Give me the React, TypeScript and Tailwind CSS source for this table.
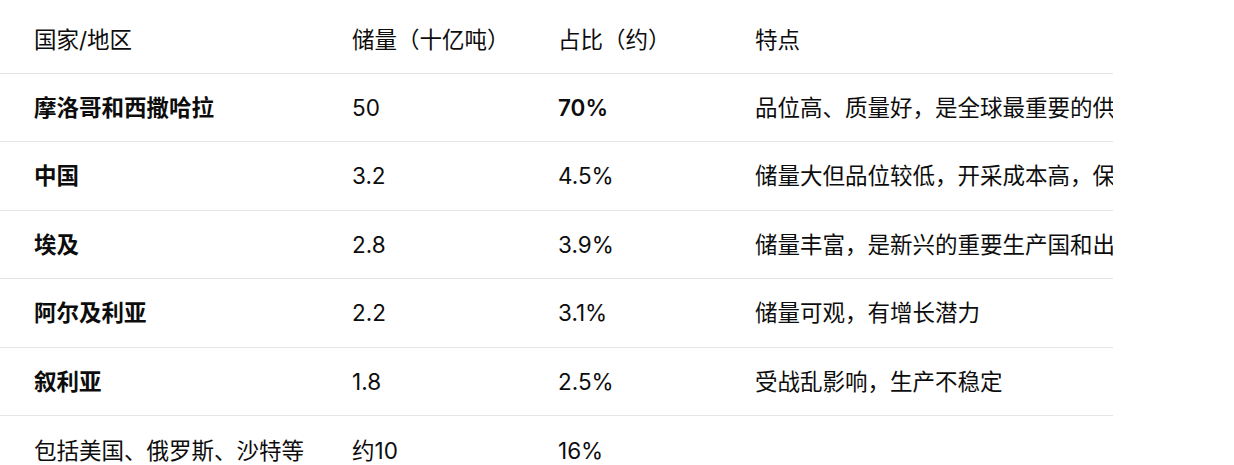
const rows = [
  { name: "摩洛哥和西撒哈拉", bold: true, reserve: "50", share: "70%", shareBold: true, note: "品位高、质量好，是全球最重要的供应来源" },
  { name: "中国", bold: true, reserve: "3.2", share: "4.5%", note: "储量大但品位较低，开采成本高，保护性开采" },
  { name: "埃及", bold: true, reserve: "2.8", share: "3.9%", note: "储量丰富，是新兴的重要生产国和出口国" },
  { name: "阿尔及利亚", bold: true, reserve: "2.2", share: "3.1%", note: "储量可观，有增长潜力" },
  { name: "叙利亚", bold: true, reserve: "1.8", share: "2.5%", note: "受战乱影响，生产不稳定" },
  { name: "包括美国、俄罗斯、沙特等", bold: false, reserve: "约10", share: "16%", note: "" },
];

export default function App() {
  return (
    <div
      className="h-[465px] w-[1234px] overflow-hidden bg-white text-[#0d0d0d]"
      style={{ fontFamily: 'Inter, "Noto Sans CJK SC", sans-serif' }}
    >
      <div className="w-[1113px] overflow-hidden">
        <table className="w-[1600px] table-fixed border-collapse text-left text-[22.5px] leading-[1.4]">
          <colgroup>
            <col className="w-[352px]" />
            <col className="w-[206px]" />
            <col className="w-[197px]" />
            <col />
          </colgroup>
          <thead>
            <tr className="h-[73px] border-b border-[#e5e5e5]">
              <th className="pl-[34px] pt-[7px] font-normal">国家/地区</th>
              <th className="pt-[7px] font-normal">储量（十亿吨）</th>
              <th className="pt-[7px] font-normal">占比（约）</th>
              <th className="pt-[7px] font-normal">特点</th>
            </tr>
          </thead>
          <tbody>
            {rows.map((r) => (
              <tr key={r.name} className="h-[68.6px] border-b border-[#e5e5e5]">
                <td className={`pl-[34px] whitespace-nowrap ${r.bold ? "font-bold" : ""}`}>{r.name}</td>
                <td>{r.reserve}</td>
                <td className={r.shareBold ? "font-semibold" : ""}>{r.share}</td>
                <td className="whitespace-nowrap">{r.note}</td>
              </tr>
            ))}
          </tbody>
        </table>
      </div>
    </div>
  );
}
